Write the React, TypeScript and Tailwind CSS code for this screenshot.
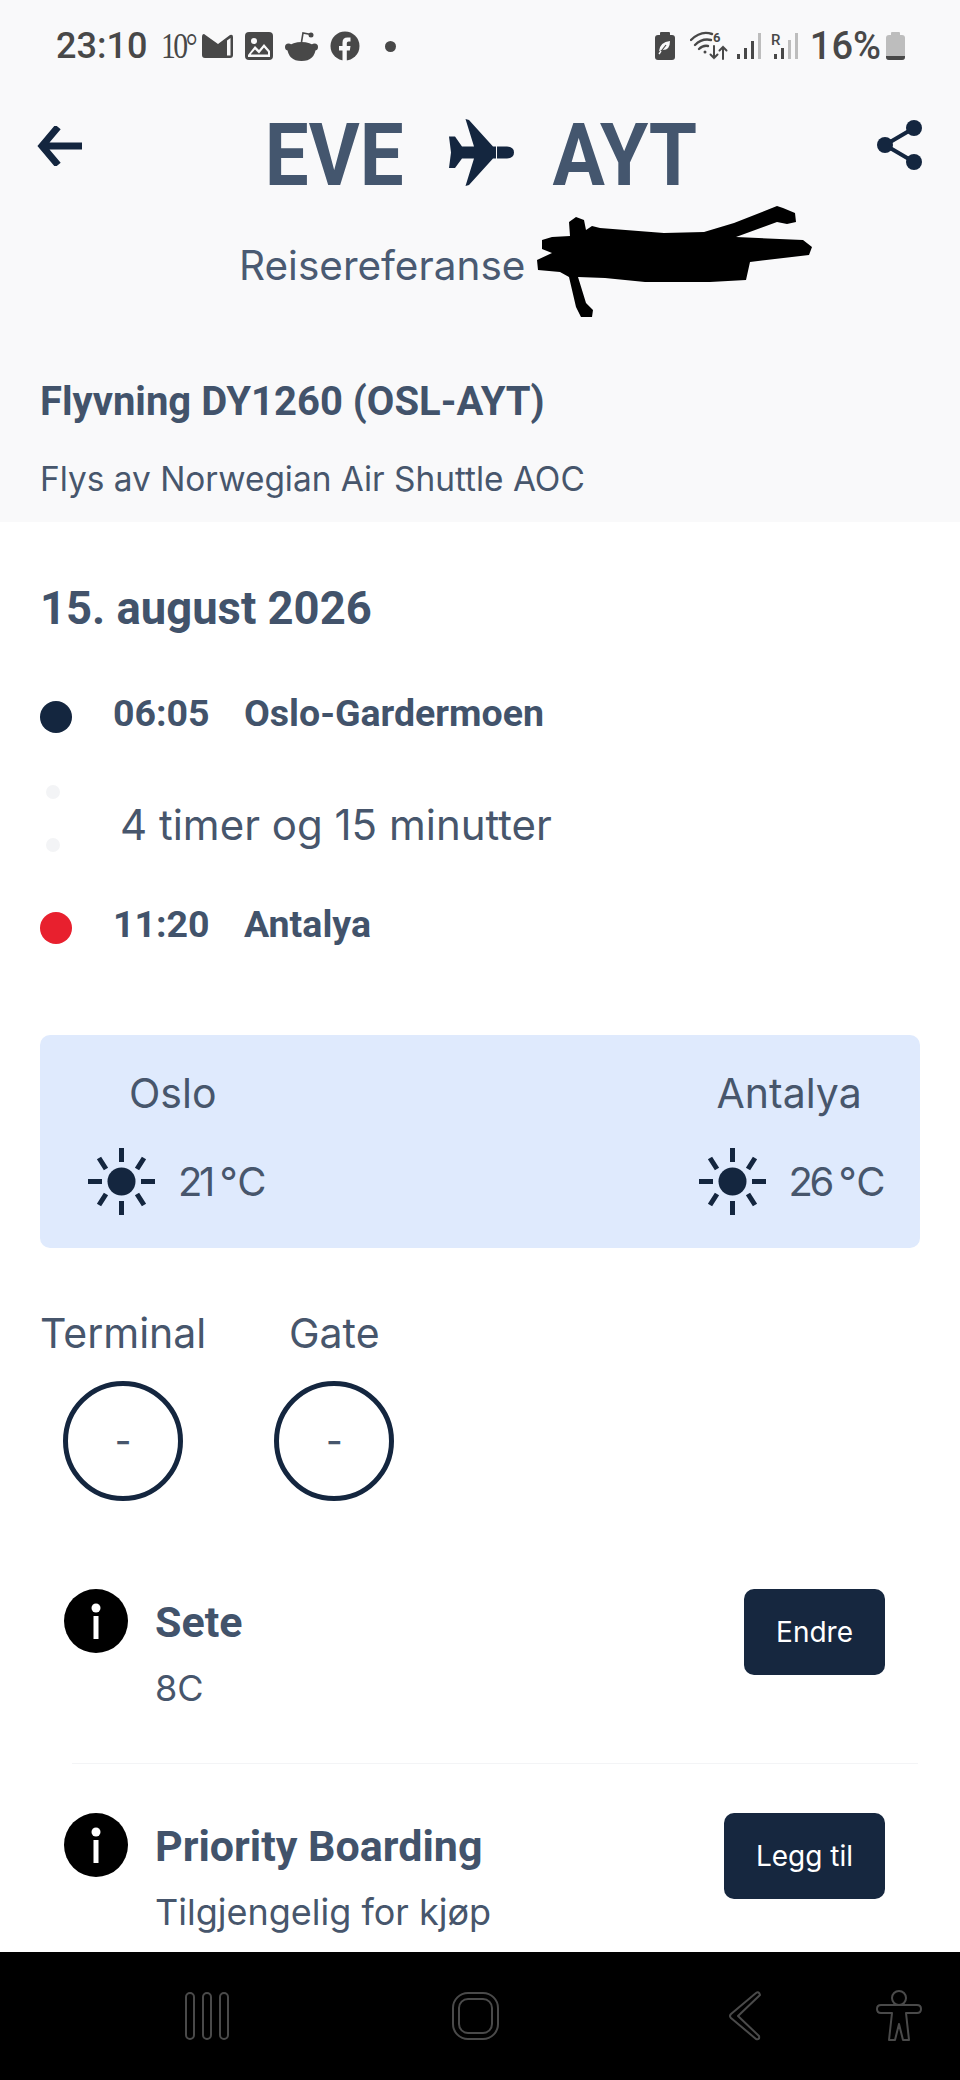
import React from "react";

const sans = "font-['Inter','Liberation_Sans',sans-serif]";
const heading = "font-['Roboto','Liberation_Sans',sans-serif]";

const MailIcon = () => (
  <svg width="31" height="24" viewBox="0 0 31 24" fill="#484848">
    <path d="M0 3 Q0 0 2 0 L16 10 L28 1 Q31 0 31 3 V21 Q31 24 28 24 H3 Q0 24 0 21 Z" />
    <path d="M25 6.5 L28.5 4 V21.5 H25 Z" fill="#f9f9fa" />
  </svg>
);

const ImageIcon = () => (
  <svg width="28" height="28" viewBox="0 0 28 28">
    <rect width="28" height="28" rx="4" fill="#484848" />
    <circle cx="9" cy="9" r="3" fill="#f9f9fa" />
    <path d="M3 23 L10 14 L14 18 L19 12 L25 19 V25 H3 Z" fill="#f9f9fa" />
    <path d="M6 22 L10 17.5 L14 21.5 L19 15.5 L23 20 V22.5 H6 Z" fill="#484848" />
  </svg>
);

const RedditIcon = () => (
  <svg width="33" height="29" viewBox="0 0 33 29" fill="#484848">
    <circle cx="26" cy="3" r="2.5" />
    <path d="M26 2.5 L18 1 L16.5 10" stroke="#484848" strokeWidth="1.6" fill="none" />
    <circle cx="3.5" cy="15" r="3.5" />
    <circle cx="29.5" cy="15" r="3.5" />
    <path d="M2 15 Q8 10 16.5 10 Q25 10 31 15 Q30 29 16.5 29 Q3 29 2 15 Z" />
  </svg>
);

const FacebookIcon = () => (
  <svg width="30" height="30" viewBox="0 0 30 30">
    <circle cx="15" cy="15" r="14.5" fill="#484848" />
    <path
      d="M12.5 30 V19.5 H9 V15 H12.5 V11.5 Q12.5 6.5 17.5 6.5 H20.5 V10.5 H18.5 Q16.8 10.5 16.8 12 V15 H20.5 L19.8 19.5 H16.8 V30 Z"
      fill="#f9f9fa"
    />
  </svg>
);

const LeafBattery = () => (
  <svg width="20" height="28" viewBox="0 0 20 28">
    <rect x="5" y="0" width="10" height="4" rx="1" fill="#484848" />
    <rect x="0" y="3" width="20" height="25" rx="3" fill="#484848" />
    <path d="M4 19 Q5 10 15 9 Q15 18 8 18 Z" fill="#f9f9fa" />
    <path d="M4 22 L11 13" stroke="#484848" strokeWidth="1.2" />
    <path d="M4 22 L6 19" stroke="#f9f9fa" strokeWidth="1.4" />
  </svg>
);

const WifiIcon = () => (
  <svg width="38" height="30" viewBox="0 0 38 30" fill="none" stroke="#484848" strokeWidth="2.4" strokeLinecap="round">
    <path d="M1 9 Q11 -1 22 3" />
    <path d="M5 14 Q12 7 21 9" />
    <path d="M9 18 Q13 14 18 15" />
    <circle cx="15" cy="21" r="1.5" fill="#484848" stroke="none" />
    <text x="23" y="11" fontSize="13" fontWeight="700" fontFamily="Roboto" fill="#484848" stroke="none">
      6
    </text>
    <path d="M24 15 V27 M20.5 23.5 L24 27 L27.5 23.5" strokeWidth="2" />
    <path d="M33 28 V16 M29.5 19.5 L33 16 L36.5 19.5" strokeWidth="2" />
  </svg>
);

const SignalIcon = () => (
  <svg width="24" height="26" viewBox="0 0 24 26" fill="#484848">
    <rect x="0" y="21" width="3" height="5" />
    <rect x="7" y="15" width="3" height="11" />
    <rect x="14" y="8" width="3" height="18" />
    <rect x="21" y="0" width="3" height="26" fill="#bdbdbd" />
  </svg>
);

const SignalRIcon = () => (
  <svg width="27" height="26" viewBox="0 0 27 26" fill="#484848">
    <text x="0" y="12" fontSize="15" fontWeight="500" fontFamily="Roboto">
      R
    </text>
    <rect x="3" y="21" width="3" height="5" />
    <rect x="10" y="15" width="3" height="11" />
    <rect x="17" y="7" width="3" height="19" fill="#bdbdbd" />
    <rect x="24" y="0" width="3" height="26" fill="#bdbdbd" />
  </svg>
);

const BatteryIcon = () => (
  <svg width="19" height="28" viewBox="0 0 19 28">
    <rect x="5" y="0" width="9" height="4" rx="1" fill="#bdbdbd" />
    <rect x="0" y="3" width="19" height="25" rx="3" fill="#bdbdbd" />
    <path d="M0 24 H19 V25 Q19 28 16 28 H3 Q0 28 0 25 Z" fill="#484848" />
  </svg>
);

const StatusBar = () => (
  <div className="flex h-[92px] items-center justify-between pl-[56px] pr-[55px] text-[#484848]">
    <div className="flex items-center">
      <span className={`${heading} text-[36px] font-medium leading-none`}>23:10</span>
      <span className="ml-[14px] font-['Liberation_Serif',serif] text-[35px] leading-none tracking-[-3px] scale-x-[0.85] origin-left">
        10°
      </span>
      <span className="ml-[1px] flex items-center gap-[12px]">
        <MailIcon />
        <ImageIcon />
        <RedditIcon />
        <FacebookIcon />
      </span>
      <span className="ml-[25px] h-[11px] w-[11px] rounded-full bg-[#484848]" />
    </div>
    <div className="flex items-center">
      <LeafBattery />
      <span className="ml-[15px]"><WifiIcon /></span>
      <span className="ml-[9px]"><SignalIcon /></span>
      <span className="ml-[10px]"><SignalRIcon /></span>
      <span className={`${heading} ml-[12px] text-[38px] font-medium leading-none`}>16%</span>
      <span className="ml-[5px]"><BatteryIcon /></span>
    </div>
  </div>
);

const PlaneIcon = () => (
  <svg width="65" height="67" viewBox="0 0 65 67" fill="#14263f">
    <path d="M16.5 0 L20 1 L44 27.5 H58 Q65 28 65 33.5 Q65 39 58 39.5 H44 L20 66 L16.5 67 L25 39.5 H13 L6 49 H0 L2 33.5 L0 17.5 H6 L13 27.5 H25 Z" />
    <path d="M47.5 27 V40" stroke="#f9f9fa" strokeWidth="1" />
  </svg>
);

const SunIcon = () => (
  <svg width="67" height="67" viewBox="0 0 67 67" fill="#14263f" stroke="#14263f" strokeWidth="5">
    <circle cx="33.5" cy="33.5" r="14" stroke="none" />
    <path d="M33.5 0 V14 M33.5 53 V67 M0 33.5 H14 M53 33.5 H67 M11 10 L18 21 M56 10 L49 21 M11 57 L18 46 M56 57 L49 46" fill="none" />
  </svg>
);

const InfoIcon = () => (
  <svg width="64" height="64" viewBox="0 0 64 64" className="shrink-0">
    <circle cx="32" cy="32" r="32" fill="#000" />
    <circle cx="32" cy="19" r="4.5" fill="#fff" />
    <rect x="29.5" y="27" width="5" height="23" fill="#fff" />
  </svg>
);

const Blot = () => (
  <svg className="absolute left-0 top-0" width="960" height="330" viewBox="0 0 960 330" fill="#000">
    <path d="M569 222 L576 217 L584 220 L586 230 L592 226 L600 228 L664 233 L704 232 L734 223 L777 206 L783 208 L795 213 L796 222 L787 224 L777 222 L736 237 L803 240 L812 247 L809 255 L750 262 L746 280 L710 282 L645 282 L605 278 L578 277 L586 303 L593 310 L592 317 L581 317 L576 307 L569 277 L560 272 L538 270 L537 260 L552 253 L542 249 L542 240 L552 237 L570 236 Z" />
  </svg>
);

const InfoRow = ({ title, detail, action }: { title: string; detail: string; action: string }) => (
  <div className="flex justify-between pl-[64px] pr-[75px]">
    <div className="flex gap-[27px]">
      <InfoIcon />
      <div className="pt-[11px]">
        <p className={`${heading} text-[43px] font-bold leading-[44px] text-[#42536b]`}>{title}</p>
        <p className={`${sans} mt-[22px] text-[36px] leading-[44px] text-[#47566c]`}>{detail}</p>
      </div>
    </div>
    <button className={`${sans} flex h-[86px] items-center rounded-[10px] bg-[#16273f] px-[32px] text-[28px] text-white`}>
      {action}
    </button>
  </div>
);

const App = () => {
  return (
    <div className="flex h-[2080px] w-[960px] flex-col overflow-hidden bg-white">
      <header className="relative h-[522px] shrink-0 bg-[#f9f9fa]">
        <StatusBar />
        <div className="relative flex h-[100px] items-center justify-center">
          <svg className="absolute left-[37px] top-[34px]" width="45" height="40" viewBox="0 0 45 40" fill="none" stroke="#14263f" strokeWidth="7">
            <path d="M45 20 H5 M21 1 L5 20 L21 39" />
          </svg>
          <div className={`${heading} ml-[2px] mt-[28px] flex items-center text-[78px] font-bold leading-none text-[#44566e]`}>
            <span className="scale-y-[1.11]">EVE</span>
            <span className="mb-[8px] ml-[45px] mr-[39px]"><PlaneIcon /></span>
            <span className="scale-y-[1.11]">AYT</span>
          </div>
          <svg className="absolute left-[877px] top-[28px]" width="45" height="50" viewBox="0 0 45 50" fill="#14263f" stroke="#14263f">
            <path d="M37 8 L8 25 L37 42" fill="none" strokeWidth="4" />
            <circle cx="37" cy="8" r="8" stroke="none" />
            <circle cx="8" cy="25" r="8" stroke="none" />
            <circle cx="37" cy="42" r="8" stroke="none" />
          </svg>
        </div>
        <p className={`${sans} mt-[50px] pl-[239px] text-[40.5px] leading-[48px] text-[#4a5a72]`}>Reisereferanse</p>
        <Blot />
        <p className={`${heading} mt-[90px] pl-[40px] text-[40px] font-bold leading-[44px] text-[#42536b]`}>
          Flyvning DY1260 (OSL-AYT)
        </p>
        <p className={`${sans} mt-[33px] pl-[40px] text-[33.4px] leading-[44px] text-[#47566c]`}>
          Flys av Norwegian Air Shuttle AOC
        </p>
      </header>

      <main className="flex-1 overflow-hidden">
        <h2 className={`${heading} mt-[65px] pl-[40px] text-[45.4px] font-bold leading-[44px] text-[#42536b]`}>15. august 2026</h2>

        <div className="mt-[66px] flex h-[40px] items-center pl-[40px]">
          <span className="h-[32px] w-[32px] rounded-full bg-[#14263f]" />
          <span className={`${heading} mb-[8px] ml-[41px] w-[131px] text-[37.5px] font-bold leading-[40px] text-[#42536b]`}>06:05</span>
          <span className={`${heading} mb-[8px] text-[37.5px] font-bold leading-[40px] text-[#42536b]`}>Oslo-Gardermoen</span>
        </div>

        <div className="mt-[48px] flex h-[67px] pl-[46px]">
          <div className="flex flex-col gap-[39px]">
            <span className="h-[14px] w-[14px] rounded-full bg-[#f3f4f6]" />
            <span className="h-[14px] w-[14px] rounded-full bg-[#f3f4f6]" />
          </div>
          <p className={`${sans} ml-[60px] mt-[18px] text-[42px] leading-[44px] text-[#47566c]`}>4 timer og 15 minutter</p>
        </div>

        <div className="mt-[56px] flex h-[40px] items-center pl-[40px]">
          <span className="h-[32px] w-[32px] rounded-full bg-[#e8202e]" />
          <span className={`${heading} mb-[9px] ml-[41px] w-[131px] text-[37.5px] font-bold leading-[40px] text-[#42536b]`}>11:20</span>
          <span className={`${heading} mb-[9px] text-[37.5px] font-bold leading-[40px] text-[#42536b]`}>Antalya</span>
        </div>

        <section className="mx-[40px] mt-[87px] flex h-[213px] justify-between rounded-[10px] bg-[#dfeafd] pl-[48px] pr-[38px] pt-[36px]">
          {[
            { city: "Oslo", temp: "21 ℃", indent: "ml-[41px]" },
            { city: "Antalya", temp: "26 ℃", indent: "ml-[18px]" },
          ].map((w) => (
            <div key={w.city}>
              <p className={`${sans} ${w.indent} text-[41px] leading-[44px] text-[#47566c]`}>{w.city}</p>
              <div className="mt-[33px] flex items-center gap-[23px]">
                <SunIcon />
                <span className={`${sans} text-[40px] leading-[44px] tracking-[-3.5px] text-[#47566c]`}>{w.temp}</span>
              </div>
            </div>
          ))}
        </section>

        <div className="mt-[63px] flex gap-[68px] pl-[40px]">
          {["Terminal", "Gate"].map((label) => (
            <div key={label} className="flex flex-col items-center">
              <p className={`${sans} text-[41px] leading-[44px] text-[#47566c]`}>{label}</p>
              <div className={`${sans} mt-[26px] flex h-[120px] w-[120px] items-center justify-center rounded-full border-[5px] border-[#14263f] text-[36px] font-medium text-[#47566c]`}>
                -
              </div>
            </div>
          ))}
        </div>

        <div className="mt-[88px]">
          <InfoRow title="Sete" detail="8C" action="Endre" />
        </div>
        <div className="ml-[72px] mr-[42px] mt-[53px] h-px bg-[#f3f4f6]" />
        <div className="mt-[49px]">
          <InfoRow title="Priority Boarding" detail="Tilgjengelig for kjøp" action="Legg til" />
        </div>
      </main>

      <nav className="relative flex h-[128px] shrink-0 items-center bg-black">
        <svg className="ml-[185px]" width="44" height="48" viewBox="0 0 44 48" fill="none" stroke="#4a4a4a" strokeWidth="2">
          <rect x="1" y="1" width="8" height="46" rx="4" />
          <rect x="18" y="1" width="8" height="46" rx="4" />
          <rect x="35" y="1" width="8" height="46" rx="4" />
        </svg>
        <svg className="ml-[223px]" width="47" height="48" viewBox="0 0 47 48" fill="none" stroke="#4a4a4a" strokeWidth="2">
          <rect x="1" y="1" width="45" height="46" rx="15" />
          <rect x="7" y="7" width="33" height="34" rx="9" />
        </svg>
        <svg className="ml-[230px]" width="32" height="50" viewBox="0 0 32 50" fill="none" stroke="#4a4a4a" strokeWidth="2" strokeLinejoin="round">
          <path d="M27 2 Q30 0 31 4 L9 25 L30 45 Q31 49 27 48 L2 27 Q0 25 2 23 Z" />
        </svg>
        <svg className="ml-[115px]" width="46" height="52" viewBox="0 0 46 52" fill="none" stroke="#4a4a4a" strokeWidth="2" strokeLinejoin="round">
          <circle cx="23" cy="8" r="7" />
          <path d="M5 15 H41 Q45 15 45 19 Q45 23 41 23 H30 L33 50 H27 L23 34 L19 50 H13 L16 23 H5 Q1 23 1 19 Q1 15 5 15 Z" />
        </svg>
      </nav>
    </div>
  );
};

export default App;
